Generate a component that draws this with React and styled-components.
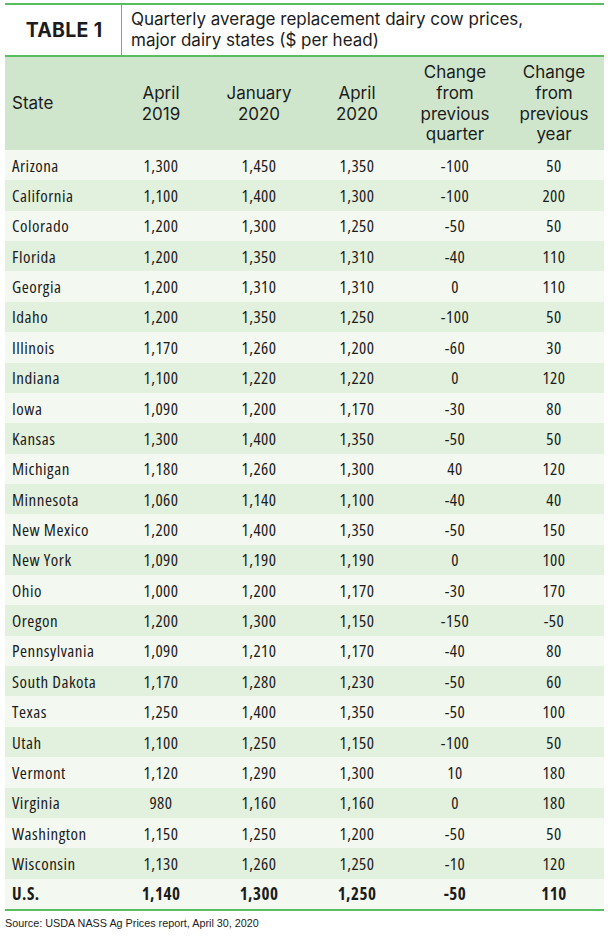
import React from "react";
import styled, { createGlobalStyle } from "styled-components";

const GlobalStyle = createGlobalStyle`
  body {
    margin: 0;
    background: #ffffff;
  }
  * {
    box-sizing: border-box;
  }
`;

const GREEN = "#5bbd62";
const HEAD_FONT = `"Inter", "Open Sans", sans-serif`;
const BODY_FONT = `"Open Sans", "DejaVu Sans Condensed", sans-serif`;

const Page = styled.div`
  padding: 3px 0 0 5px;
  width: 610px;
`;

const TitleBar = styled.div`
  display: flex;
  width: 599px;
  height: 54px;
  border-top: 2px solid ${GREEN};
  border-bottom: 2px solid ${GREEN};
`;

const TitleLabel = styled.div`
  width: 117px;
  border-right: 1px solid ${GREEN};
  display: flex;
  align-items: center;
  justify-content: center;
  padding-left: 2px;
  font-family: ${HEAD_FONT};
  font-weight: 700;
  font-size: 19.5px;
  color: #1c1c1c;
  letter-spacing: 0.3px;
`;

const TitleText = styled.div`
  flex: 1;
  padding-left: 9px;
  display: flex;
  align-items: center;
  font-family: ${HEAD_FONT};
  font-size: 17px;
  line-height: 21px;
  color: #1c1c1c;
`;

const Grid = styled.div`
  display: grid;
  width: 599px;
  grid-template-columns: 107px repeat(4, 98px) 100px;
  border-bottom: 2px solid ${GREEN};
`;

const Row = styled.div`
  display: contents;
`;

const Cell = styled.div`
  display: flex;
  align-items: center;
  justify-content: ${(p) => (p.$left ? "flex-start" : "center")};
  text-align: ${(p) => (p.$left ? "left" : "center")};
  padding-left: ${(p) => (p.$left ? "7px" : "0")};
  height: ${(p) => (p.$head ? "93px" : "30.36px")};
  white-space: nowrap;
  background: ${(p) => p.$bg};
  font-family: ${(p) => (p.$head ? HEAD_FONT : BODY_FONT)};
  font-stretch: ${(p) => (p.$head ? "normal" : "75%")};
  font-size: 17px;
  letter-spacing: ${(p) => (p.$head ? "0" : "0.5px")};
  line-height: ${(p) => (p.$head ? "20.7px" : "1")};
  font-weight: ${(p) => (p.$bold ? 700 : 400)};
  color: #1c1c1c;
`;

const Source = styled.div`
  padding-top: 6px;
  font-family: "Liberation Sans", Arial, sans-serif;
  font-size: 10.8px;
  color: #222;
`;

const headers = [
  "State",
  "April\n2019",
  "January\n2020",
  "April\n2020",
  "Change\nfrom\nprevious\nquarter",
  "Change\nfrom\nprevious\nyear",
];

const rows = [
  ["Arizona", "1,300", "1,450", "1,350", "-100", "50"],
  ["California", "1,100", "1,400", "1,300", "-100", "200"],
  ["Colorado", "1,200", "1,300", "1,250", "-50", "50"],
  ["Florida", "1,200", "1,350", "1,310", "-40", "110"],
  ["Georgia", "1,200", "1,310", "1,310", "0", "110"],
  ["Idaho", "1,200", "1,350", "1,250", "-100", "50"],
  ["Illinois", "1,170", "1,260", "1,200", "-60", "30"],
  ["Indiana", "1,100", "1,220", "1,220", "0", "120"],
  ["Iowa", "1,090", "1,200", "1,170", "-30", "80"],
  ["Kansas", "1,300", "1,400", "1,350", "-50", "50"],
  ["Michigan", "1,180", "1,260", "1,300", "40", "120"],
  ["Minnesota", "1,060", "1,140", "1,100", "-40", "40"],
  ["New Mexico", "1,200", "1,400", "1,350", "-50", "150"],
  ["New York", "1,090", "1,190", "1,190", "0", "100"],
  ["Ohio", "1,000", "1,200", "1,170", "-30", "170"],
  ["Oregon", "1,200", "1,300", "1,150", "-150", "-50"],
  ["Pennsylvania", "1,090", "1,210", "1,170", "-40", "80"],
  ["South Dakota", "1,170", "1,280", "1,230", "-50", "60"],
  ["Texas", "1,250", "1,400", "1,350", "-50", "100"],
  ["Utah", "1,100", "1,250", "1,150", "-100", "50"],
  ["Vermont", "1,120", "1,290", "1,300", "10", "180"],
  ["Virginia", "980", "1,160", "1,160", "0", "180"],
  ["Washington", "1,150", "1,250", "1,200", "-50", "50"],
  ["Wisconsin", "1,130", "1,260", "1,250", "-10", "120"],
];

const total = ["U.S.", "1,140", "1,300", "1,250", "-50", "110"];

const HEAD_BG = "#cfe6cc";
const ODD_BG = "#f3f8f1";
const EVEN_BG = "#e2f0de";

function Lines({ text }) {
  const parts = text.split("\n");
  return (
    <span>
      {parts.map((p, i) => (
        <React.Fragment key={i}>
          {p}
          {i < parts.length - 1 && <br />}
        </React.Fragment>
      ))}
    </span>
  );
}

export default function App() {
  return (
    <Page>
      <GlobalStyle />
      <TitleBar>
        <TitleLabel>TABLE 1</TitleLabel>
        <TitleText>
          Quarterly average replacement dairy cow prices,
          <br />
          major dairy states ($ per head)
        </TitleText>
      </TitleBar>
      <Grid>
        <Row>
          {headers.map((h, i) => (
            <Cell key={i} $head $left={i === 0} $bg={HEAD_BG}>
              <Lines text={h} />
            </Cell>
          ))}
        </Row>
        {rows.map((r, ri) => (
          <Row key={r[0]}>
            {r.map((v, i) => (
              <Cell key={i} $left={i === 0} $bg={ri % 2 === 0 ? ODD_BG : EVEN_BG}>
                {v}
              </Cell>
            ))}
          </Row>
        ))}
        <Row>
          {total.map((v, i) => (
            <Cell key={i} $left={i === 0} $bold $bg={ODD_BG}>
              {v}
            </Cell>
          ))}
        </Row>
      </Grid>
      <Source>Source: USDA NASS Ag Prices report, April 30, 2020</Source>
    </Page>
  );
}
